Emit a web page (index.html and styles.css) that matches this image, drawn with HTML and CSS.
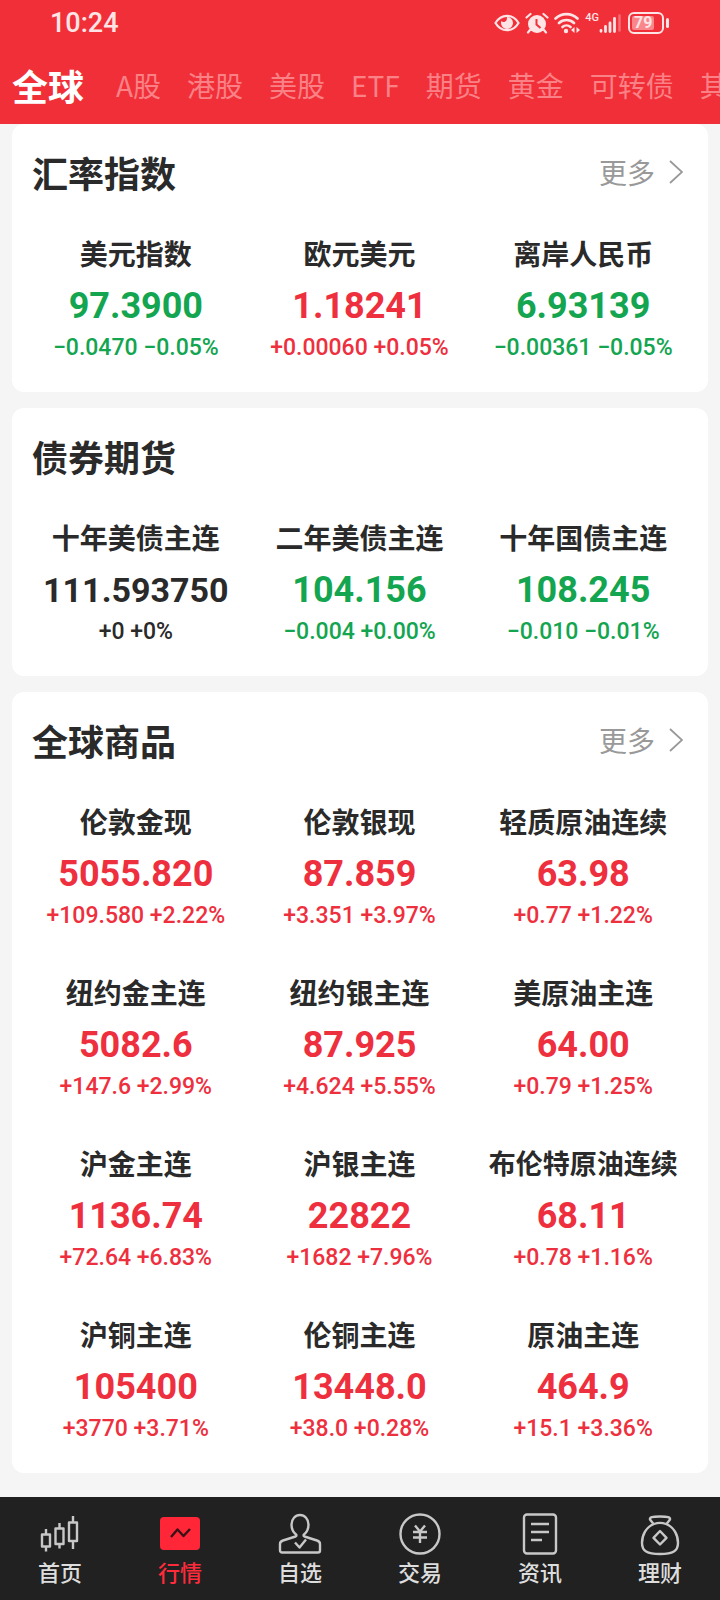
FILE: index.html
```html
<!DOCTYPE html>
<html lang="zh-CN">
<head>
  <meta charset="UTF-8" />
  <meta name="viewport" content="width=device-width, initial-scale=1.0"/>
  <title>行情</title>
  <link rel="stylesheet" href="styles.css">
</head>
<body>
  <header>
    <div class="status">
      <span class="time">10:24</span>
      <div class="status-icons">
        <svg width="26" height="20" viewBox="0 0 26 20">
          <path d="M1.5 10C7 .5 19 .5 24.500 10C19 19.500 7 19.500 1.500 10Z" fill="none" stroke="currentColor" stroke-width="2.200"/>
          <path d="M13 4a6 6 0 1 1-6 6c0-.8.1-1.500.4-2.100a3.200 3.200 0 0 0 5.500-2.300c0-.6 0-1.100.1-1.600Z" fill="currentColor"/>
        </svg>
        <svg width="24" height="22" viewBox="0 0 24 22">
          <circle cx="12" cy="12" r="9" fill="currentColor"/>
          <path d="M1.500 5.500 5.500 2M22.500 5.500 18.500 2M5 18l-2 2.500M19 18l2 2.500" stroke="currentColor" stroke-width="2.200" stroke-linecap="round"/>
          <path d="M11.500 7v5.500l4 3.500" fill="none" stroke="#f12f38" stroke-width="2"/>
        </svg>
        <svg width="26" height="22" viewBox="0 0 26 22">
          <path d="M1.500 6.500a16 16 0 0 1 22 0M5 11a11 11 0 0 1 15 0M8.500 15a6 6 0 0 1 8 0" fill="none" stroke="currentColor" stroke-width="2.600" stroke-linecap="round"/>
          <circle cx="12" cy="19" r="2.200" fill="currentColor"/>
          <path d="M20.500 15v6l-3.500-3ZM22.500 15v6l3.500-3Z" fill="currentColor"/>
        </svg>
        <div class="signal">
          <span>4G</span>
          <svg width="22" height="20" viewBox="0 0 22 20">
            <path d="M2 17.500v.8M6.500 13.500v5M11 10v8.500M15.500 5.500v13" stroke="currentColor" stroke-width="2.800" stroke-linecap="round"/>
            <path d="M20.500 1.500v17" stroke="currentColor" stroke-width="2.400" opacity=".35"/>
          </svg>
        </div>
        <div class="battery"><span>79</span></div>
      </div>
    </div>
    <nav class="tabs">
      <a href="#global" class="active">全球</a>
      <a href="#a">A股</a>
      <a href="#hk">港股</a>
      <a href="#us">美股</a>
      <a href="#etf">ETF</a>
      <a href="#futures">期货</a>
      <a href="#gold">黄金</a>
      <a href="#bonds">可转债</a>
      <a href="#other">其</a>
    </nav>
  </header>

  <main>
    <section class="card">
      <div class="card-head">
        <h2>汇率指数</h2>
        <a href="#forex" class="more">更多
          <svg width="14" height="24" viewBox="0 0 14 24"><path d="M1 1l12 11L1 23" fill="none" stroke="currentColor" stroke-width="1.800"/></svg>
        </a>
      </div>
      <div class="quotes">
        <div class="quote down"><h3>美元指数</h3><strong>97.3900</strong><p>−0.0470 −0.05%</p></div>
        <div class="quote up"><h3>欧元美元</h3><strong>1.18241</strong><p>+0.00060 +0.05%</p></div>
        <div class="quote down"><h3>离岸人民币</h3><strong>6.93139</strong><p>−0.00361 −0.05%</p></div>
      </div>
    </section>

    <section class="card">
      <div class="card-head">
        <h2>债券期货</h2>
      </div>
      <div class="quotes">
        <div class="quote long"><h3>十年美债主连</h3><strong>111.593750</strong><p>+0 +0%</p></div>
        <div class="quote down"><h3>二年美债主连</h3><strong>104.156</strong><p>−0.004 +0.00%</p></div>
        <div class="quote down"><h3>十年国债主连</h3><strong>108.245</strong><p>−0.010 −0.01%</p></div>
      </div>
    </section>

    <section class="card">
      <div class="card-head">
        <h2>全球商品</h2>
        <a href="#goods" class="more">更多
          <svg width="14" height="24" viewBox="0 0 14 24"><path d="M1 1l12 11L1 23" fill="none" stroke="currentColor" stroke-width="1.800"/></svg>
        </a>
      </div>
      <div class="quotes">
        <div class="quote up"><h3>伦敦金现</h3><strong>5055.820</strong><p>+109.580 +2.22%</p></div>
        <div class="quote up"><h3>伦敦银现</h3><strong>87.859</strong><p>+3.351 +3.97%</p></div>
        <div class="quote up"><h3>轻质原油连续</h3><strong>63.98</strong><p>+0.77 +1.22%</p></div>
        <div class="quote up"><h3>纽约金主连</h3><strong>5082.6</strong><p>+147.6 +2.99%</p></div>
        <div class="quote up"><h3>纽约银主连</h3><strong>87.925</strong><p>+4.624 +5.55%</p></div>
        <div class="quote up"><h3>美原油主连</h3><strong>64.00</strong><p>+0.79 +1.25%</p></div>
        <div class="quote up"><h3>沪金主连</h3><strong>1136.74</strong><p>+72.64 +6.83%</p></div>
        <div class="quote up"><h3>沪银主连</h3><strong>22822</strong><p>+1682 +7.96%</p></div>
        <div class="quote up"><h3 class="long-name">布伦特原油连续</h3><strong>68.11</strong><p>+0.78 +1.16%</p></div>
        <div class="quote up"><h3>沪铜主连</h3><strong>105400</strong><p>+3770 +3.71%</p></div>
        <div class="quote up"><h3>伦铜主连</h3><strong>13448.0</strong><p>+38.0 +0.28%</p></div>
        <div class="quote up"><h3>原油主连</h3><strong>464.9</strong><p>+15.1 +3.36%</p></div>
      </div>
    </section>
  </main>

  <nav class="bottom-nav">
    <a href="#home">
      <svg viewBox="0 0 44 44">
        <path d="M4 21.500h8v12H4ZM17.500 15.500h8V31h-8ZM31 9.500h8V28h-8ZM8 16v5.500M8 33.500v5M21.500 10v5.500M21.500 31v4.500M35 3v6.500M35 28v8"/>
      </svg>
      <span>首页</span>
    </a>
    <a href="#market" class="active">
      <svg viewBox="0 0 44 44">
        <rect class="tile" x="2" y="4" width="40" height="33" rx="4"/>
        <path class="trend" d="M13 24l6.500-7.500 6 6.500L32 16"/>
      </svg>
      <span>行情</span>
    </a>
    <a href="#watchlist">
      <svg viewBox="0 0 44 44">
        <path d="M18 21.500c-3-2.500-4.500-5.500-4.500-10a8.500 9.500 0 0 1 17 0c0 4.500-1.500 7.500-4.500 10-.8.7-.5 1.500.5 2l12.500 4c2 .7 3 1.500 3 3.500v6.500a2 2 0 0 1-2 2H4a2 2 0 0 1-2-2V31c0-2 1-2.800 3-3.500l12.500-4c1-.5 1.300-1.300.5-2ZM17 29.500l4.500 5 6.500-8"/>
      </svg>
      <span>自选</span>
    </a>
    <a href="#trade">
      <svg viewBox="0 0 44 44">
        <circle cx="22" cy="21" r="19.500"/>
        <path d="M17 12.500l5 6 5-6M22 18.500v11.500M15 19h14M15 24.500h14"/>
      </svg>
      <span>交易</span>
    </a>
    <a href="#news">
      <svg viewBox="0 0 44 44">
        <rect x="6" y="1.500" width="32" height="39" rx="3"/>
        <path d="M13 11h18M13 19h18M13 27h11"/>
      </svg>
      <span>资讯</span>
    </a>
    <a href="#wealth">
      <svg viewBox="0 0 44 44">
        <path d="M16 11C8 14 4 22 4 30c0 8 5 11 18 11s18-3 18-11c0-8-4-16-12-19-4-1.500-8-1.500-12 0ZM15.500 11 12 6.500C11.500 4 14 3.500 22 3.500s10.500.5 10 3L28.500 11M22 18l6.500 6.800-6.500 6.700-6.500-6.700Z"/>
      </svg>
      <span>理财</span>
    </a>
  </nav>
</body>
</html>
```
FILE: styles.css
```css
:root {
  --red: #f12f38;
  --up: #ee2f3e;
  --down: #13a550;
  --text: #2a2a2a;
  --muted: #999;
  --bg: #f5f5f5;
  --white: #fff;
  --radius: 12px;
}

* {
  box-sizing: border-box;
  margin: 0;
  padding: 0;
}

body {
  font-family: "Noto Sans CJK SC", sans-serif;
  background: var(--bg);
  color: var(--text);
  padding-bottom: 127px;
}

a {
  color: inherit;
  text-decoration: none;
}

header {
  background: var(--red);
  color: var(--white);
}

.status {
  display: flex;
  justify-content: space-between;
  align-items: center;
  height: 46px;
  padding: 0 56px 0 50px;
  color: #ffe4e6;
}

.time {
  font-family: Roboto, sans-serif;
  font-size: 27px;
  font-weight: 500;
}

.status-icons {
  display: flex;
  align-items: center;
  gap: 5px;
}

.signal {
  display: flex;
  align-items: center;
}

.signal span {
  align-self: flex-start;
  font-family: Roboto, sans-serif;
  font-size: 11px;
  font-weight: 500;
  line-height: 10px;
}

.battery {
  position: relative;
  width: 36px;
  height: 22px;
  margin-left: 2px;
  padding: 2px;
  border: 2px solid currentColor;
  border-radius: 6px;
}

.battery::after {
  content: "";
  position: absolute;
  right: -7px;
  top: 4px;
  width: 3px;
  height: 10px;
  border-radius: 2px;
  background: currentColor;
}

.battery span {
  display: block;
  width: 80%;
  border-radius: 2px;
  background: #f9868b;
  font-family: Roboto, sans-serif;
  font-size: 16px;
  font-weight: 700;
  line-height: 14px;
  text-align: center;
}

.tabs {
  display: flex;
  align-items: center;
  gap: 26px;
  height: 78px;
  padding: 0 12px;
  overflow: hidden;
  white-space: nowrap;
  font-size: 28px;
}

.tabs a {
  flex: none;
  color: #fa8287;
}

.tabs .active {
  margin-right: 6px;
  color: var(--white);
  font-size: 36px;
  font-weight: 700;
}

main {
  display: flex;
  flex-direction: column;
  gap: 16px;
  padding: 0 12px;
}

.card {
  padding: 0 13px 28px 12px;
  background: var(--white);
  border-radius: var(--radius);
}

.card-head {
  display: flex;
  justify-content: space-between;
  align-items: center;
  height: 102px;
  padding: 0 12px 6px 8px;
}

.card-head h2 {
  font-size: 36px;
  font-weight: 700;
}

.more {
  display: flex;
  align-items: center;
  gap: 14px;
  color: var(--muted);
  font-size: 28px;
}

.quotes {
  display: grid;
  grid-template-columns: repeat(3, 1fr);
  row-gap: 33px;
}

.quote {
  text-align: center;
  white-space: nowrap;
}

.quote h3 {
  font-size: 28px;
  font-weight: 700;
  line-height: 54px;
}

.quote .long-name {
  font-size: 27px;
}

.quote strong {
  display: block;
  font-family: Roboto, sans-serif;
  font-size: 36px;
  font-weight: 700;
  line-height: 52px;
}

.quote p {
  font-family: Roboto, sans-serif;
  font-size: 23px;
  font-weight: 500;
  line-height: 32px;
}

.long strong {
  font-size: 34px;
}

.up strong,
.up p {
  color: var(--up);
}

.down strong,
.down p {
  color: var(--down);
}

.bottom-nav {
  position: fixed;
  left: 0;
  right: 0;
  bottom: 0;
  display: flex;
  height: 103px;
  padding-top: 16px;
  background: #212121;
  color: #ddd;
}

.bottom-nav a {
  flex: 1;
  display: flex;
  flex-direction: column;
  align-items: center;
  font-size: 22px;
  font-weight: 500;
  line-height: 29px;
}

.bottom-nav svg {
  width: 44px;
  height: 44px;
  fill: none;
  stroke: #c8c8c8;
  stroke-width: 2.4;
  stroke-linejoin: round;
}

.bottom-nav .active {
  color: #ff2b3b;
}

.bottom-nav .tile {
  fill: #ff2638;
  stroke: none;
}

.bottom-nav .trend {
  stroke: #3a1115;
}
```
